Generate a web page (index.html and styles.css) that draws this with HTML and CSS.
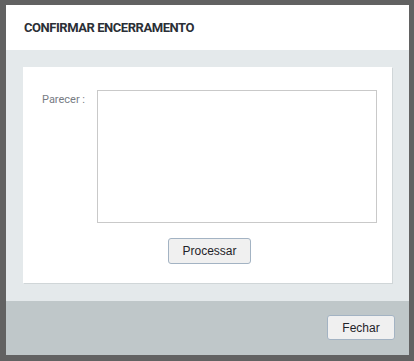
FILE: index.html
```html
<!DOCTYPE html>
<html>
<head>
<meta charset="utf-8">
<link rel="stylesheet" href="styles.css">
</head>
<body>
<div class="page">
  <div class="modal">
    <div class="modal-header">
      <h1 class="title">CONFIRMAR ENCERRAMENTO</h1>
    </div>
    <div class="modal-body">
      <div class="card">
        <div class="form-row">
          <label class="label">Parecer :</label>
          <textarea class="textarea"></textarea>
        </div>
        <div class="actions">
          <button class="btn btn-process">Processar</button>
        </div>
      </div>
    </div>
    <div class="modal-footer">
      <button class="btn btn-close">Fechar</button>
    </div>
  </div>
</div>
</body>
</html>
```
FILE: styles.css
```css
html, body {
  margin: 0;
  padding: 0;
  background: #626262;
}
body {
  font-family: Roboto, "Liberation Sans", Arial, sans-serif;
}
.page {
  width: 414px;
  height: 361px;
  box-sizing: border-box;
  padding: 5px 5px 6px 6px;
}
.modal {
  width: 403px;
  height: 350px;
  display: flex;
  flex-direction: column;
}
.modal-header {
  height: 45px;
  background: #ffffff;
  display: flex;
  align-items: center;
  padding-left: 18px;
}
.title {
  margin: 0;
  font-size: 13px;
  font-weight: 700;
  color: #2b2f36;
  letter-spacing: -0.45px;
}
.modal-body {
  background: #e4e9eb;
  padding: 17px 17px 18px 17px;
}
.card {
  background: #ffffff;
  height: 216px;
  box-sizing: border-box;
  box-shadow: 1px 1px 0 #d0d6d8;
  padding: 23px 15px 0 19px;
}
.form-row {
  display: flex;
  align-items: flex-start;
}
.label {
  width: 55px;
  font-size: 11px;
  color: #777c84;
  padding-top: 3px;
}
.textarea {
  width: 280px;
  height: 133px;
  box-sizing: border-box;
  border: 1px solid #c9c9c9;
  margin: 0;
  padding: 0;
  resize: none;
  display: block;
}
.actions {
  display: flex;
  justify-content: center;
  padding-top: 15px;
}
.btn {
  font-family: "Liberation Sans", Arial, sans-serif;
  font-size: 12px;
  color: #1f2329;
  background: #f0f0f0;
  border: 1px solid #a3b3c3;
  border-radius: 3px;
  box-sizing: border-box;
  padding: 0;
}
.btn-process {
  width: 83px;
  height: 26px;
}
.modal-footer {
  flex: 1;
  background: #bfc7c9;
  display: flex;
  justify-content: flex-end;
  align-items: flex-start;
  padding: 14px 14px 0 0;
}
.btn-close {
  width: 68px;
  height: 25px;
}
```
